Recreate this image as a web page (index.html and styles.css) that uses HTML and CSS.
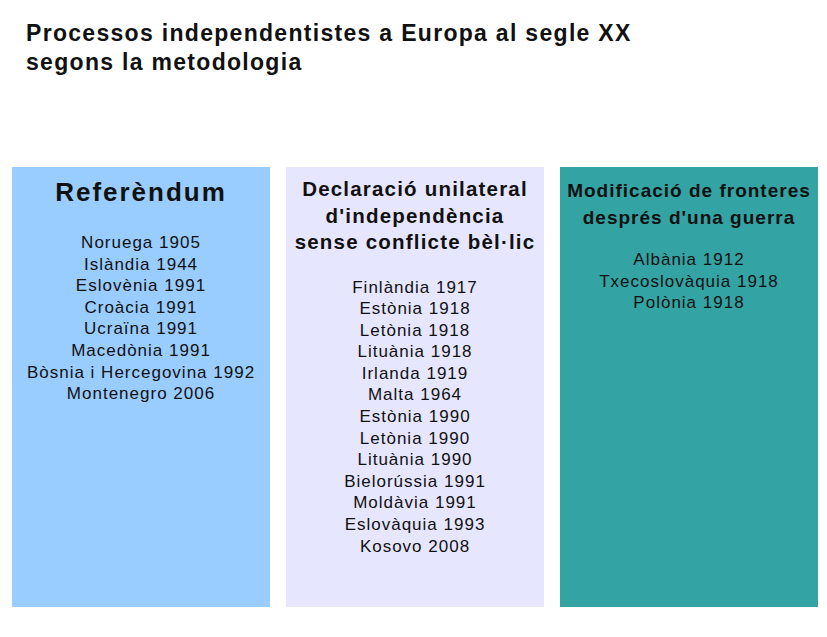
FILE: index.html
```html
<!DOCTYPE html>
<html lang="ca">
<head>
<meta charset="utf-8">
<title>Processos independentistes</title>
<link rel="stylesheet" href="styles.css">
</head>
<body>
<h1 class="title">Processos independentistes a Europa al segle XX<br>segons la metodologia</h1>
<div class="panels">
  <section class="panel panel-blue">
    <h2 class="head head-big">Referèndum</h2>
    <ul class="items items-a">
      <li>Noruega 1905</li>
      <li>Islàndia 1944</li>
      <li>Eslovènia 1991</li>
      <li>Croàcia 1991</li>
      <li>Ucraïna 1991</li>
      <li>Macedònia 1991</li>
      <li>Bòsnia i Hercegovina 1992</li>
      <li>Montenegro 2006</li>
    </ul>
  </section>
  <section class="panel panel-lilac">
    <h2 class="head head-mid">Declaració unilateral<br>d'independència<br>sense conflicte bèl·lic</h2>
    <ul class="items items-b">
      <li>Finlàndia 1917</li>
      <li>Estònia 1918</li>
      <li>Letònia 1918</li>
      <li>Lituània 1918</li>
      <li>Irlanda 1919</li>
      <li>Malta 1964</li>
      <li>Estònia 1990</li>
      <li>Letònia 1990</li>
      <li>Lituània 1990</li>
      <li>Bielorússia 1991</li>
      <li>Moldàvia 1991</li>
      <li>Eslovàquia 1993</li>
      <li>Kosovo 2008</li>
    </ul>
  </section>
  <section class="panel panel-teal">
    <h2 class="head head-small">Modificació de fronteres<br>després d'una guerra</h2>
    <ul class="items items-c">
      <li>Albània 1912</li>
      <li>Txecoslovàquia 1918</li>
      <li>Polònia 1918</li>
    </ul>
  </section>
</div>
</body>
</html>
```

FILE: styles.css
```css
html, body {
  margin: 0;
  padding: 0;
  background: #ffffff;
}
body {
  font-family: "Liberation Sans", Arial, sans-serif;
  color: #111111;
  width: 827px;
  height: 637px;
  overflow: hidden;
}
.title {
  margin: 0;
  padding: 19px 0 0 26px;
  font-size: 23px;
  line-height: 29px;
  letter-spacing: 1.3px;
  font-weight: bold;
  color: #111;
}
.panels {
  display: grid;
  grid-template-columns: 258px 258px 258px;
  column-gap: 16px;
  padding-left: 12px;
  margin-top: 90px;
  height: 440px;
}
.panel {
  text-align: center;
  padding-top: 9px;
  box-sizing: border-box;
}
.panel-blue { background: #99ccff; }
.panel-lilac { background: #e6e6fe; }
.panel-teal { background: #33a3a3; }
.head {
  margin: 0;
  font-weight: bold;
  color: #111;
}
.head-big {
  font-size: 26px;
  line-height: 32px;
  letter-spacing: 2px;
}
.head-mid {
  font-size: 20.5px;
  line-height: 26.5px;
  letter-spacing: 1.2px;
}
.head-small {
  font-size: 19px;
  line-height: 26.5px;
  letter-spacing: 1px;
  padding-top: 2px;
}
.items {
  list-style: none;
  margin: 0;
  padding: 0;
  font-size: 17px;
  line-height: 21.6px;
  letter-spacing: 1px;
  color: #111;
}
.items-a { margin-top: 24px; }
.items-b { margin-top: 21px; }
.items-c { margin-top: 18px; }
```
